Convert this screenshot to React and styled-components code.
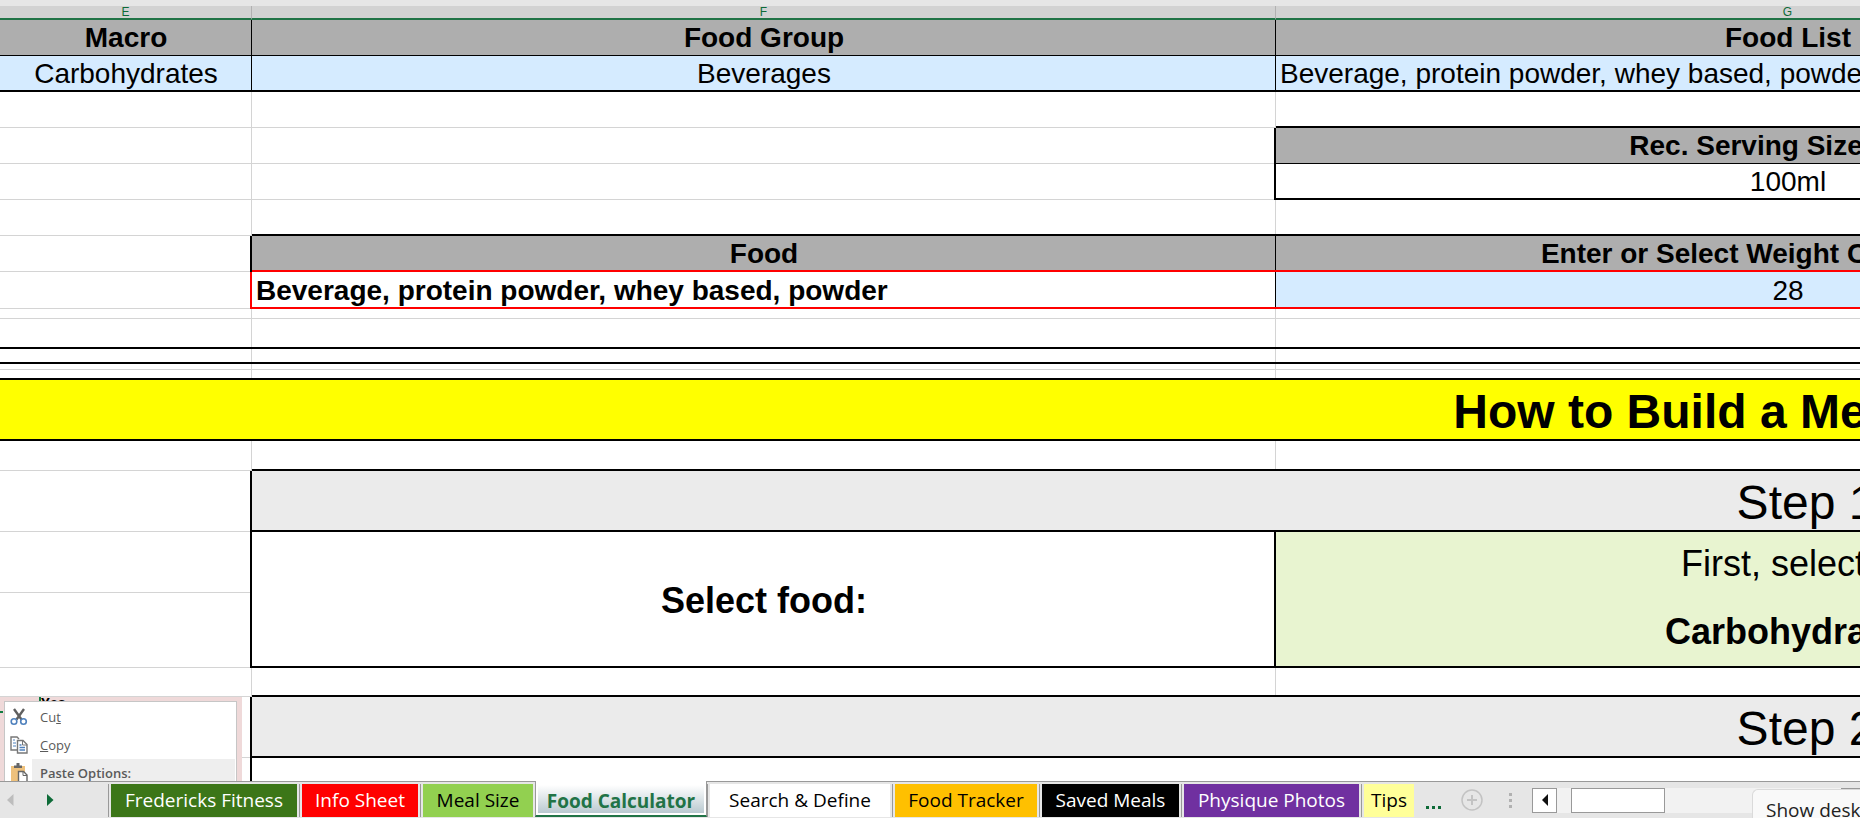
import React from 'react'
import styled, { createGlobalStyle, css } from 'styled-components'


const tabs = [
    { name: 'Fredericks Fitness', width: 186, bg: '#3c7618', color: '#fff' },
    { name: 'Info Sheet', width: 116, bg: '#ff0000', color: '#fff' },
    { name: 'Meal Size', width: 110, bg: '#92d050', color: '#000' },
    { name: 'Food Calculator', width: 172, active: true },
    { name: 'Search & Define', width: 180, bg: '#fff', color: '#000' },
    { name: 'Food Tracker', width: 142, bg: '#ffc000', color: '#000' },
    { name: 'Saved Meals', width: 137, bg: '#000', color: '#fff' },
    { name: 'Physique Photos', width: 175, bg: '#7030a0', color: '#fff' },
    { name: 'Tips', width: 50, bg: '#ffff99', color: '#000' },
]

const Sheet = () => {
    return (
        <SheetTable>
            <colgroup>
                <Col $width={252} />
                <Col $width={1024} />
                <Col $width={1024} />
                <Col $width={1060} />
            </colgroup>
            <thead>
                <tr>
                    <ColumnName scope="col">E</ColumnName>
                    <ColumnName scope="col">F</ColumnName>
                    <ColumnName scope="col">G</ColumnName>
                    <ColumnName scope="col">H</ColumnName>
                </tr>
            </thead>
            <tbody>
                <Row>
                    <HeadCell $right="thin" $bottom="thin">Macro</HeadCell>
                    <HeadCell $right="thin" $bottom="thin">Food Group</HeadCell>
                    <HeadCell $right="thin" $bottom="thin">Food List</HeadCell>
                    <HeadCell $bottom="thin" />
                </Row>
                <Row>
                    <Cell $bg="#d5ebff" $right="thin" $bottom="thick">Carbohydrates</Cell>
                    <Cell $bg="#d5ebff" $right="thin" $bottom="thick">Beverages</Cell>
                    <Cell $bg="#d5ebff" $right="thin" $bottom="thick" $align="left">Beverage, protein powder, whey based, powder</Cell>
                    <Cell $bg="#d5ebff" $bottom="thick" />
                </Row>
                <Row>
                    <Cell /><Cell /><Cell $bottom="thick" /><Cell />
                </Row>
                <Row>
                    <Cell />
                    <Cell $right="thick" />
                    <HeadCell $right="thick" $bottom="thin">Rec. Serving Size (g/ml)</HeadCell>
                    <Cell />
                </Row>
                <Row>
                    <Cell />
                    <Cell $right="thick" />
                    <Cell $right="thick" $bottom="thick">100ml</Cell>
                    <Cell />
                </Row>
                <Row>
                    <Cell /><Cell $bottom="thick" /><Cell $bottom="thick" /><Cell />
                </Row>
                <Row>
                    <Cell $right="thick" />
                    <HeadCell $right="thin" $bottom="red">Food</HeadCell>
                    <HeadCell $right="thick" $bottom="red">Enter or Select Weight Consumed (g)</HeadCell>
                    <Cell />
                </Row>
                <Row $height={37}>
                    <Cell $right="red" />
                    <Cell $bold $right="thin" $bottom="red" $align="left">Beverage, protein powder, whey based, powder</Cell>
                    <Cell $bg="#d5ebff" $right="red" $bottom="red">28</Cell>
                    <Cell />
                </Row>
                <Row $height={10}>
                    <Cell /><Cell /><Cell /><Cell />
                </Row>
                <Row $height={30}>
                    <Cell $bottom="thick" /><Cell $bottom="thick" /><Cell $bottom="thick" /><Cell $bottom="thick" />
                </Row>
                <Row $height={15}>
                    <Cell $bottom="thick" /><Cell $bottom="thick" /><Cell $bottom="thick" /><Cell $bottom="thick" />
                </Row>
                <Row $height={6}>
                    <Cell /><Cell /><Cell /><Cell />
                </Row>
                <Row $height={10}>
                    <Cell $bottom="thick" /><Cell $bottom="thick" /><Cell $bottom="thick" /><Cell $bottom="thick" />
                </Row>
                <Row $height={61}>
                    <TitleCell colSpan={4} $bg="#ffff00" $bottom="thick" $bold>How to Build a Meal</TitleCell>
                </Row>
                <Row $height={30}>
                    <Cell /><Cell $bottom="thick" /><Cell $bottom="thick" /><Cell $bottom="thick" />
                </Row>
                <Row $height={61}>
                    <Cell $right="thick" />
                    <TitleCell colSpan={3} $bg="#ebebeb" $bottom="thick">Step 1</TitleCell>
                </Row>
                <Row $height={61}>
                    <Cell $right="thick" />
                    <StepCell rowSpan={2} $bold $right="thick" $bottom="thick">Select food:</StepCell>
                    <StepCell $bg="#e8f4d0" $right="thick" $bottom="none">First, select a</StepCell>
                    <Cell $bottom="none" />
                </Row>
                <Row $height={75}>
                    <Cell $right="thick" />
                    <StepCell $bg="#e8f4d0" $bold $right="thick" $bottom="thick">Carbohydrate:</StepCell>
                    <Cell $bottom="thick" />
                </Row>
                <Row $height={29}>
                    <Cell /><Cell $bottom="thick" /><Cell $bottom="thick" /><Cell $bottom="thick" />
                </Row>
                <Row $height={61}>
                    <Cell $right="thick" />
                    <TitleCell colSpan={3} $bg="#ebebeb" $bottom="thick">Step 2</TitleCell>
                </Row>
                <Row $height={61}>
                    <Cell $right="thick" />
                    <Cell colSpan={3} />
                </Row>
            </tbody>
        </SheetTable>
    )
}

const CutIcon = () => (
    <svg width="18" height="18" viewBox="0 0 18 18" fill="none">
        <path d="M4 1 L11.5 11.5 M14 1 L6.5 11.5" stroke="#5f5f5f" strokeWidth="2.4" />
        <circle cx="4" cy="13.5" r="2.8" stroke="#4f81bd" strokeWidth="1.6" />
        <circle cx="13.5" cy="13.5" r="2.8" stroke="#4f81bd" strokeWidth="1.6" />
    </svg>
)

const CopyIcon = () => (
    <svg width="18" height="18" viewBox="0 0 18 18" fill="none">
        <path d="M7 14H1V1h6l2 2" stroke="#777" strokeWidth="1.4" />
        <path d="M3 4h2M3 7h3M3 10h3" stroke="#4f81bd" />
        <path d="M7.5 4.5h5.500l4 4v8.500h-9.500z" fill="#fff" stroke="#777" strokeWidth="1.4" />
        <path d="M12.5 4.5v4.500h4.500" stroke="#777" />
        <path d="M9.5 9h2M9.5 11.5h5.500M9.5 14h5.500" stroke="#4f81bd" strokeWidth="1.4" />
    </svg>
)

const PasteIcon = () => (
    <svg width="18" height="20" viewBox="0 0 18 20" fill="none">
        <path d="M1 3h14v16H1z" fill="#eec17c" />
        <path d="M4 5V2.500h2.500V0h3v2.500H12V5z" fill="#666" />
        <path d="M8.5 8.5h5l3.500 3.500v8H8.500z" fill="#fff" stroke="#666" strokeWidth="1.4" />
        <path d="M13 8.500v4h4" stroke="#666" />
    </svg>
)

const InsertedPicture = () => {
    return (
        <Picture>
            <PictureText>Yes</PictureText>
            <ContextMenu>
                <MenuItem><CutIcon /><span>Cu<u>t</u></span></MenuItem>
                <MenuItem><CopyIcon /><span><u>C</u>opy</span></MenuItem>
                <MenuItem $selected><PasteIcon /><span>Paste Options:</span></MenuItem>
            </ContextMenu>
        </Picture>
    )
}

const TabBar = () => {
    return (
        <Bar>
            <TabNav>
                <NavButton aria-label="Previous sheet">
                    <svg width="7" height="12" viewBox="0 0 7 12"><path d="M6.500 0v12L0 6z" fill="#bdbdbd" /></svg>
                </NavButton>
                <NavButton aria-label="Next sheet">
                    <svg width="7" height="12" viewBox="0 0 7 12"><path d="M0 0v12L6.500 6z" fill="#0e6b38" /></svg>
                </NavButton>
            </TabNav>
            <Tabs>
                {tabs.map((tab) => tab.active
                    ? <ActiveTab key={tab.name} $width={tab.width}><span>{tab.name}</span></ActiveTab>
                    : <Tab key={tab.name} $width={tab.width} $bg={tab.bg} $color={tab.color}>{tab.name}</Tab>
                )}
            </Tabs>
            <MoreButton aria-label="More sheets">
                <svg width="15" height="3" viewBox="0 0 15 3" fill="#0e6b38"><path d="M0 0h3v3H0zM6 0h3v3H6zM12 0h3v3h-3z" /></svg>
            </MoreButton>
            <AddButton aria-label="New sheet">
                <svg width="22" height="22" viewBox="0 0 22 22" fill="none" stroke="#c3c3c3">
                    <circle cx="11" cy="11" r="10" strokeWidth="1.5" />
                    <path d="M11 6v10M6 11h10" strokeWidth="2" />
                </svg>
            </AddButton>
            <Splitter width="3" height="15" viewBox="0 0 3 15" fill="#b1b1b1">
                <path d="M0 0h3v3H0zM0 6h3v3H0zM0 12h3v3H0z" />
            </Splitter>
            <ScrollTrack>
                <ScrollButton aria-label="Scroll left">
                    <svg width="6" height="12" viewBox="0 0 6 12"><path d="M6 0v12L0 6z" fill="#111" /></svg>
                </ScrollButton>
                <ScrollThumb />
                <ScrollButton aria-label="Scroll right">
                    <svg width="6" height="12" viewBox="0 0 6 12"><path d="M0 0v12l6-6z" fill="#111" /></svg>
                </ScrollButton>
            </ScrollTrack>
            <Tooltip role="tooltip">Show desktop</Tooltip>
        </Bar>
    )
}

const App = () => {
    return (
        <Window>
            <GlobalStyle />
            <SheetArea>
                <Sheet />
                <InsertedPicture />
            </SheetArea>
            <TabBar />
        </Window>
    )
}

export default App

const GlobalStyle = createGlobalStyle`
body{
    margin:0;
    overflow:hidden;
    background:#fff;
}
`;

const Window = styled.div`
height:100vh;
display:flex;
flex-direction: column;
font-family:"Liberation Sans", Arial, sans-serif;
color:#000;
`;

const SheetArea = styled.main`
flex:1;
min-height:0;
position:relative;
overflow:hidden;
border-top:6px solid #e6e6e6;
`;

const SheetTable = styled.table`
width:3360px;
table-layout:fixed;
border-collapse:separate;
border-spacing:0;
`;

const Col = styled.col`
width:${(props) => props.$width}px;
`;

const ColumnName = styled.th`
box-sizing:border-box;
height:14px;
padding:0;
background:#d2d2d2;
border-right:1px solid #b1b1b1;
border-bottom:2px solid #217346;
color:#0e6b38;
font-size:12px;
line-height:12px;
font-weight:normal;
`;

const Row = styled.tr`
height:${(props) => props.$height || 36}px;
`;

const lines = {
    none: { size: 0, color: 'transparent' },
    grid: { size: 1, color: '#d4d4d4' },
    thin: { size: 1, color: '#000' },
    thick: { size: 2, color: '#000' },
    red: { size: 2, color: '#ff0000' },
};

// the stronger line is listed first, so it runs over the weaker one at the corner
const cellLines = ({ $right = 'grid', $bottom = 'grid' }) => {
    const right = `inset -${lines[$right].size}px 0 ${lines[$right].color}`;
    const bottom = `inset 0 -${lines[$bottom].size}px ${lines[$bottom].color}`;
    return $bottom === 'grid' ? `${right}, ${bottom}` : `${bottom}, ${right}`;
};

const cellStyle = css`
box-sizing:border-box;
padding:0 4px;
overflow:hidden;
white-space:nowrap;
vertical-align:middle;
text-align:${(props) => props.$align || 'center'};
background:${(props) => props.$bg || '#fff'};
box-shadow:${cellLines};
font-weight:${(props) => props.$bold ? 'bold' : 'normal'};
font-size:28px;
line-height:34px;
`;

const Cell = styled.td`
${cellStyle}
`;

const HeadCell = styled.th`
${cellStyle}
background:#aeaeae;
font-weight:bold;
`;

const TitleCell = styled.td`
${cellStyle}
padding-top:3px;
font-size:48px;
line-height:54px;
`;

const StepCell = styled.td`
${cellStyle}
padding-top:2px;
font-size:36px;
line-height:40px;
`;

/* picture pasted over the cells */
const Picture = styled.div`
position:absolute;
left:0;
top:691px;
width:242px;
height:120px;
box-sizing:border-box;
padding:0 5px 0 4px;
background:linear-gradient(#107c41, #107c41) 0 14px / 3px 2px no-repeat, #efd9d9;
`;

const PictureText = styled.div`
height:4px;
margin-left:35px;
border-left:2px solid #107c41;
overflow:hidden;
font-family:"Open Sans", sans-serif;
font-size:14px;
line-height:12px;
font-weight:bold;
`;

const ContextMenu = styled.div`
height:115px;
box-sizing:border-box;
padding:1px;
background:#fff;
border:1px solid #c6c6c6;
`;

const MenuItem = styled.div`
display:flex;
align-items:center;
height:28px;
padding-left:4px;
gap:4px;
font-family:"Open Sans", sans-serif;
font-size:13px;
color:#5a5a5a;

span{
    flex:1;
    padding-left:8px;
    line-height:28px;
    background:${(props) => props.$selected ? '#eeeeee' : 'transparent'};
    font-weight:${(props) => props.$selected ? 600 : 'normal'};
}
`;

const Bar = styled.footer`
position:relative;
height:37px;
box-sizing:border-box;
display:flex;
background:#e6e6e6;
border-top:1px solid #999;
font-family:"Open Sans", sans-serif;
`;

const TabNav = styled.div`
width:108px;
flex:none;
display:flex;
align-items:center;
gap:33px;
padding-left:7px;
box-sizing:border-box;
`;

const NavButton = styled.button`
display:flex;
align-items:center;
padding:0;
border:0;
background:transparent;
`;

const Tabs = styled.nav`
display:flex;
`;

const Tab = styled.button`
width:${(props) => props.$width + 5}px;
height:33px;
margin:2px 0 0;
padding:0;
border:0;
border-left:1px solid #999;
box-shadow:inset 2px 0 #e6e6e6, inset -2px 0 #e6e6e6;
background:${(props) => props.$bg};
color:${(props) => props.$color};
font-family:inherit;
font-size:19px;
line-height:33px;
white-space:nowrap;
`;

const ActiveTab = styled.button`
width:${(props) => props.$width}px;
height:36px;
margin-top:-1px;
padding:4px 2px 2px;
box-sizing:border-box;
border:1px solid #999;
border-top:0;
border-bottom:2px solid #217346;
background:#fff;
color:#217346;
font-family:inherit;
font-size:19px;
font-weight:bold;
white-space:nowrap;

span{
    display:block;
    height:28px;
    line-height:32px;
    background:linear-gradient(#fff, #b9c9d0);
}
`;

const MoreButton = styled(NavButton)`
align-items:flex-end;
padding:0 0 9px;
margin-left:10px;
`;

const AddButton = styled(NavButton)`
margin:0 0 0 20px;
`;

const Splitter = styled.svg`
flex:none;
align-self:center;
margin:0 20px 0 26px;
`;

const ScrollTrack = styled.div`
flex:1;
align-self:center;
display:flex;
height:25px;
background:#f2f2f2;
`;

const ScrollButton = styled.button`
width:25px;
height:25px;
padding:0;
display:flex;
align-items:center;
justify-content:center;
background:#fff;
border:1px solid #999;

&:last-child{
    width:19px;
    margin-left:auto;
}
`;

const ScrollThumb = styled.div`
width:94px;
height:25px;
box-sizing:border-box;
margin-left:14px;
background:#fff;
border:1px solid #999;
`;

const Tooltip = styled.div`
position:absolute;
right:0;
top:7px;
width:108px;
height:40px;
box-sizing:border-box;
padding:6px 0 0 13px;
overflow:hidden;
background:#f9f9f9;
border:1px solid #dadada;
border-right:0;
border-radius:6px 0 0 0;
color:#222;
font-size:19px;
line-height:28px;
white-space:nowrap;
`;
